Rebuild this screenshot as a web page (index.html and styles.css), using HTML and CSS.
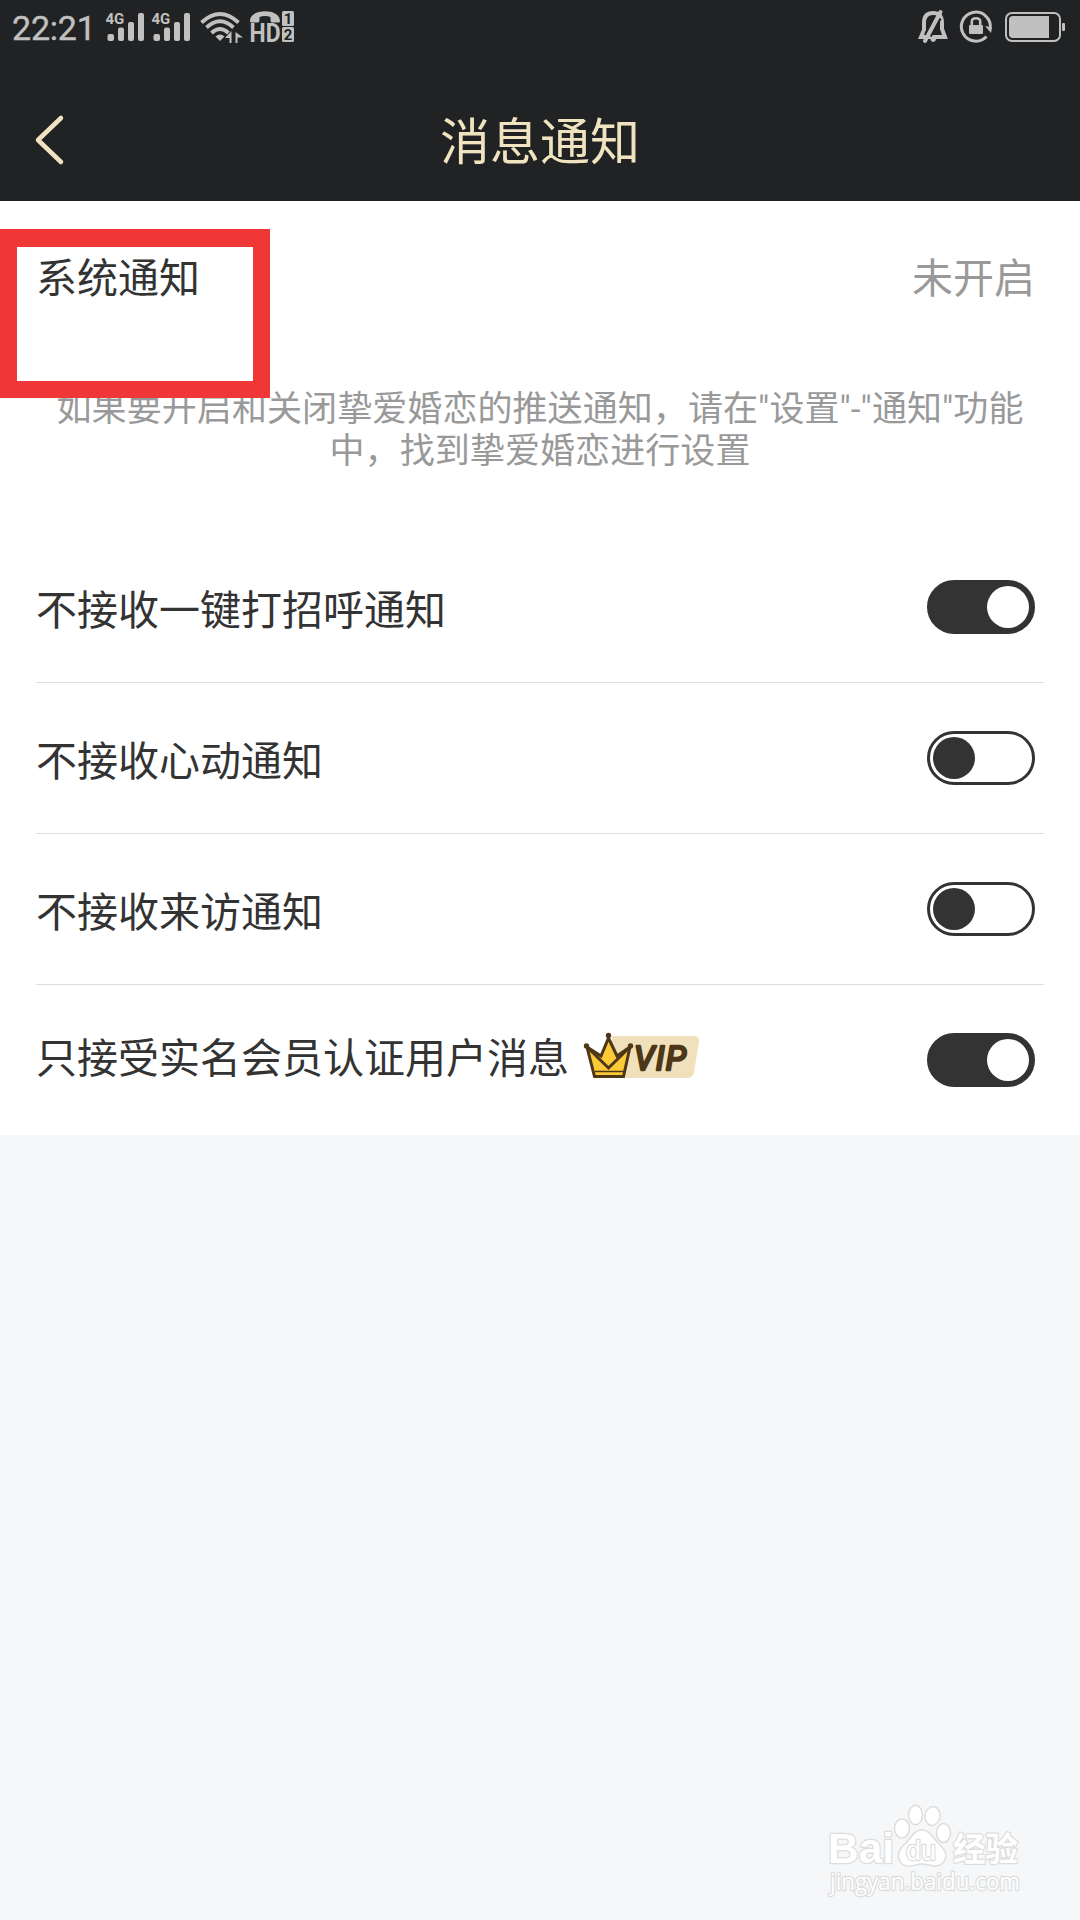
FILE: index.html
```html
<!DOCTYPE html>
<html lang="zh-CN">
<head>
    <meta charset="UTF-8">
    <meta name="viewport" content="width=device-width, initial-scale=1.0">
    <title>消息通知</title>
    <link rel="stylesheet" href="styles.css">
</head>
<body>

    <header class="header">
        <div class="status-bar">
            <div class="status-group">
                <span class="time">22:21</span>
                <svg class="signal" width="40" height="34" viewBox="105 10 40 34">
                    <text x="105.5" y="23.5">4G</text>
                    <rect x="107.5" y="34" width="6.5" height="7" rx="2"/>
                    <rect x="118" y="27.5" width="6" height="13.5" rx="2"/>
                    <rect x="128" y="22" width="6" height="19" rx="2"/>
                    <rect x="138" y="13" width="6" height="28" rx="2"/>
                </svg>
                <svg class="signal second" width="40" height="34" viewBox="105 10 40 34">
                    <text x="105.5" y="23.5">4G</text>
                    <rect x="107.5" y="34" width="6.5" height="7" rx="2"/>
                    <rect x="118" y="27.5" width="6" height="13.5" rx="2"/>
                    <rect x="128" y="22" width="6" height="19" rx="2"/>
                    <rect x="138" y="13" width="6" height="28" rx="2"/>
                </svg>
                <svg class="wifi" width="44" height="34" viewBox="200 10 44 34">
                    <g fill="none" stroke="#c0c0c0" stroke-width="3.8">
                        <path d="M201.5 22.5Q220 5.5 238.5 22.5"/>
                        <path d="M206.5 27.5Q220 15 233.5 27.5"/>
                        <path d="M211.5 33Q220 25 228.5 33"/>
                    </g>
                    <path d="M215.5 36.5Q220 32.5 224.5 36.5L220 41Z"/>
                    <path d="M225 38L231.5 31V43H229.5V38ZM235.5 43V32L243 37.5H237.5V43Z"/>
                </svg>
                <svg class="hd" width="46" height="34" viewBox="249 10 46 34">
                    <path d="M250 21C250 8 280 8 280 21Q280 22.5 278.5 22.5H272Q270.5 22.5 270.5 20V17Q265 15 259.5 17V20Q259.5 22.5 258 22.5H251.5Q250 22.5 250 21Z"/>
                    <text class="hd-text" x="249.5" y="42" textLength="31" lengthAdjust="spacingAndGlyphs">HD</text>
                    <rect x="282" y="11" width="12" height="15" rx="1.5"/>
                    <rect x="282" y="27" width="12" height="15" rx="1.5"/>
                    <text class="sim" x="288" y="23.7">1</text>
                    <text class="sim" x="288" y="39.7">2</text>
                </svg>
            </div>
            <div class="status-group">
                <svg width="32" height="36" viewBox="917 9 32 36">
                    <path fill="none" stroke="#c0c0c0" stroke-width="4" d="M924 30V23Q924 13 933 13T942 23V29L945 37H921L924 30Z"/>
                    <path d="M930.5 39H936V40Q933 44 930.5 40Z"/>
                    <path stroke="#202224" stroke-width="8" d="M928 35L938 17"/>
                    <path stroke="#c0c0c0" stroke-width="4" stroke-linecap="round" d="M925 41L940.5 12"/>
                </svg>
                <svg class="lock" width="34" height="36" viewBox="959 9 34 36">
                    <path fill="none" stroke="#c0c0c0" stroke-width="3" d="M986.5 36.5A14.5 14.5 0 1 1 990.3 28"/>
                    <path d="M985 26L992 27.5L991 33Z"/>
                    <rect x="969" y="25" width="14" height="9" rx="1"/>
                    <path fill="none" stroke="#c0c0c0" stroke-width="2.6" d="M971.8 26V21.5Q971.8 18.3 976 18.3T980.2 21.5V26"/>
                </svg>
                <svg class="battery" width="61" height="32" viewBox="1004 11 61 32">
                    <rect x="1006" y="13" width="54" height="28" rx="6" fill="none" stroke="#c0c0c0" stroke-width="2"/>
                    <path d="M1013 16H1049V38H1013Q1009 38 1009 34V20Q1009 16 1013 16Z"/>
                    <rect x="1062" y="23" width="3" height="8" rx="1"/>
                </svg>
            </div>
        </div>
        <div class="title-bar">
            <svg class="back" width="30" height="50" viewBox="35 115 30 50">
                <path d="M61 118L38 140L61 162"/>
            </svg>
            <h1>消息通知</h1>
        </div>
    </header>

    <main class="settings">
        <div class="system-row">
            <span>系统通知</span>
            <span class="state">未开启</span>
            <div class="highlight"></div>
        </div>
        <p class="hint">如果要开启和关闭挚爱婚恋的推送通知，请在"设置"-"通知"功能<br>中，找到挚爱婚恋进行设置</p>

        <div class="row">
            <span>不接收一键打招呼通知</span>
            <div class="switch on"></div>
        </div>
        <div class="row">
            <span>不接收心动通知</span>
            <div class="switch"></div>
        </div>
        <div class="row">
            <span>不接收来访通知</span>
            <div class="switch"></div>
        </div>
        <div class="row last">
            <span>只接受实名会员认证用户消息</span>
            <svg class="vip" width="118" height="48" viewBox="582 1031 118 48">
                <path fill="#f0e1bc" d="M612 1036H693Q700 1036 699 1042L694 1072Q693 1078 687 1078H612Z"/>
                <path fill="#fdc938" stroke="#4d3717" stroke-width="3" d="M587 1047L601 1056L608.5 1038L617 1056L630 1047L623.5 1076.5H594.5Z"/>
                <path fill="none" stroke="#4d3717" stroke-width="3" d="M588 1048L608.5 1068L629 1048"/>
                <path fill="none" stroke="#4d3717" stroke-width="1.5" d="M595 1071.5H624"/>
                <g fill="#4d3717">
                    <circle cx="586.5" cy="1046" r="2.7"/>
                    <circle cx="608.5" cy="1035.5" r="2.7"/>
                    <circle cx="630.5" cy="1046" r="2.7"/>
                </g>
                <text x="634" y="1069.5" textLength="52">VIP</text>
            </svg>
            <div class="switch on"></div>
        </div>
    </main>

    <svg class="watermark" width="200" height="100" viewBox="824 1800 200 100">
        <g class="logo">
            <text class="latin" x="828" y="1863" textLength="66" lengthAdjust="spacingAndGlyphs">Bai</text>
            <ellipse cx="902" cy="1828.5" rx="7.5" ry="9.5"/>
            <ellipse cx="915.5" cy="1815" rx="7" ry="9.8"/>
            <ellipse cx="932.5" cy="1816" rx="7.5" ry="9.5" transform="rotate(10 932.5 1816)"/>
            <ellipse cx="943.5" cy="1833" rx="7" ry="9.5"/>
            <path d="M922 1830C930 1830 933 1838 939 1844C946 1850 948 1857 943 1863C937 1869 929 1864 922 1864C915 1864 909 1869 902 1864C896 1858 898 1850 905 1844C911 1838 914 1830 922 1830Z"/>
            <text class="du" x="906" y="1860" textLength="30" lengthAdjust="spacingAndGlyphs">du</text>
            <text class="cn" x="953" y="1861" textLength="65" lengthAdjust="spacingAndGlyphs">经验</text>
            <text class="url" x="830" y="1890" textLength="190" lengthAdjust="spacingAndGlyphs">jingyan.baidu.com</text>
        </g>
    </svg>

</body>
</html>
```

FILE: styles.css
```css
* {
    box-sizing: border-box;
}

body {
    margin: 0;
    min-height: 1920px;
    position: relative;
    background-color: #f5f7f9;
    color: #333333;
    font-family: Roboto, "Noto Sans CJK SC", sans-serif;
    font-size: 41px;
}

svg {
    display: block;
    flex-shrink: 0;
    overflow: visible;
}

.header {
    height: 201px;
    background-color: #202224;
}

.status-bar {
    display: flex;
    justify-content: space-between;
    height: 54px;
    padding: 0 15px 0 12px;
    fill: #c0c0c0;
    color: #c0c0c0;
}

.status-group {
    display: flex;
    align-items: center;
}

.time {
    width: 93px;
    font-size: 34px;
    line-height: 54px;
    letter-spacing: -0.2px;
    padding-top: 2px;
    -webkit-text-stroke: 0.4px #c0c0c0;
}

.signal text {
    font-size: 15px;
    font-weight: bold;
}

.second {
    margin-left: 6px;
}

.wifi {
    margin-left: 9px;
}

.hd {
    margin-left: 5px;
}

.hd-text {
    font-size: 26px;
    font-weight: bold;
}

.sim {
    font-size: 15px;
    font-weight: bold;
    text-anchor: middle;
    fill: #202224;
}

.lock {
    margin-left: 10px;
}

.battery {
    margin-left: 11px;
}

.title-bar {
    display: grid;
    grid-template-columns: 100px 1fr 100px;
    align-items: center;
    height: 147px;
}

.title-bar h1 {
    margin: 30px 0 0;
    color: #efe3c0;
    font-size: 50px;
    font-weight: normal;
    line-height: 70px;
    text-align: center;
}

.back {
    margin: 24px 0 0 35px;
    fill: none;
    stroke: #efe3c0;
    stroke-width: 4.5;
    stroke-linecap: round;
    stroke-linejoin: round;
}

.settings {
    height: 934px;
    background-color: #ffffff;
}

.system-row {
    position: relative;
    display: flex;
    justify-content: space-between;
    align-items: center;
    height: 152px;
    padding: 0 45px 4px 36px;
}

.state {
    color: #999999;
}

/* red frame around the system notification entry */
.highlight {
    position: absolute;
    left: 0;
    top: 28px;
    width: 270px;
    height: 169px;
    border: 17px solid #f03737;
    border-top-width: 18px;
}

.hint {
    margin: 0;
    height: 179px;
    padding-top: 36px;
    color: #999999;
    font-size: 35px;
    line-height: 42px;
    letter-spacing: 0.08px;
    text-align: center;
    white-space: nowrap;
}

.row {
    display: flex;
    align-items: center;
    height: 151px;
    margin: 0 36px;
    padding: 0 9px 0 0;
    border-bottom: 1px solid #dddddd;
}

.row.last {
    height: 150px;
    padding-bottom: 1px;
    border-bottom: none;
}

.row.last span {
    margin-top: -10px;
}

.switch {
    width: 108px;
    height: 54px;
    margin-left: auto;
    padding: 3px;
    border: 3px solid #333333;
    border-radius: 27px;
}

.switch::before {
    content: "";
    display: block;
    width: 42px;
    height: 42px;
    border-radius: 50%;
    background-color: #333333;
}

.switch.on {
    background-color: #333333;
}

.switch.on::before {
    margin-left: auto;
    background-color: #ffffff;
}

.vip {
    margin: -10px 0 0 13px;
}

.vip text {
    fill: #4d3717;
    stroke: #4d3717;
    stroke-width: 2.5;
    stroke-linejoin: round;
    font-size: 33px;
    font-weight: normal;
    font-style: italic;
}

.watermark {
    position: absolute;
    left: 824px;
    top: 1800px;
}

.logo {
    fill: #ffffff;
    stroke: #dddddd;
    stroke-width: 1.5;
}

.logo text {
    paint-order: stroke;
    stroke-width: 2.5;
    stroke-linejoin: round;
}

.latin {
    font-family: "Liberation Sans", sans-serif;
    font-size: 43px;
    font-weight: bold;
}

.du {
    font-family: "Liberation Sans", sans-serif;
    font-size: 27px;
}

.cn {
    font-size: 33px;
    font-weight: bold;
}

.logo .url {
    font-family: "Open Sans", sans-serif;
    font-size: 23px;
    stroke: #dcdddd;
    stroke-width: 2.5;
}
```
